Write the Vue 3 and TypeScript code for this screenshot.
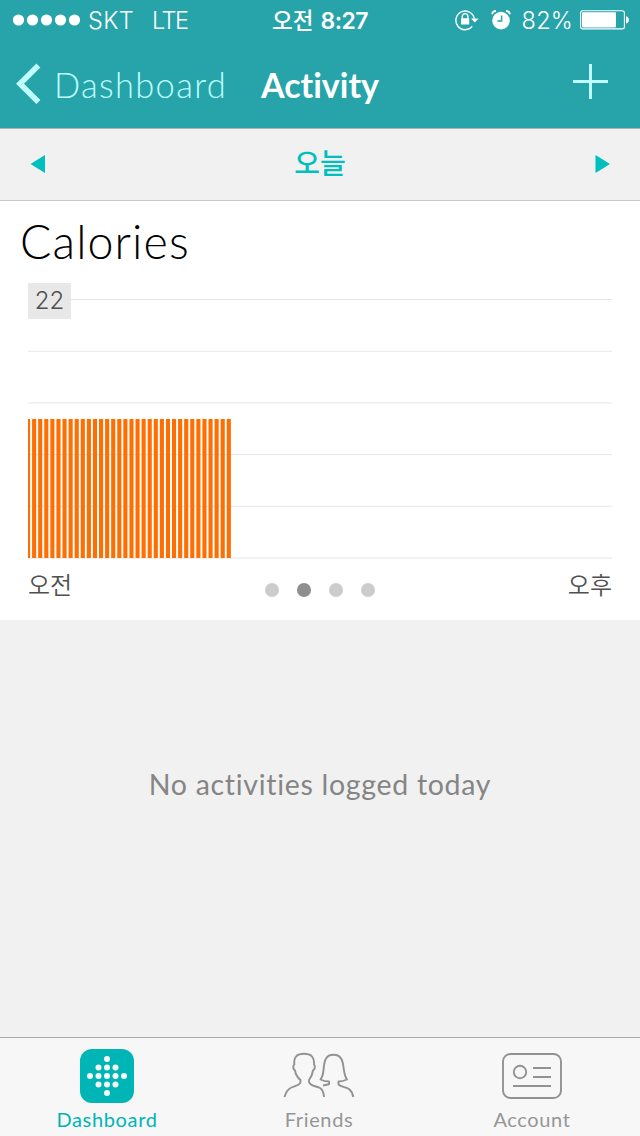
<script setup lang="ts">
const gridLines: number[] = Array.from({ length: 6 }, (_, i) => 16 + i * 51.7)

interface Bar { x: number; width: number }
const bars: Bar[] = Array.from({ length: 34 }, (_, i) => {
  const start = -2 + (i * 584) / 96
  const x = Math.max(0, start)
  return { x, width: start + 4.1 - x }
})

const pages = [0, 1, 2, 3]
const activePage = 1

const logoDots: [number, number][] = [
  [27, 10],
  [18.5, 18.5], [27, 18.5], [35.5, 18.5],
  [10, 27], [18.5, 27], [27, 27], [35.5, 27], [44, 27],
  [18.5, 35.5], [27, 35.5], [35.5, 35.5],
  [27, 44],
]
</script>

<template>
  <div class="screen">
    <header class="top">
      <div class="status">
        <div class="status-left">
          <svg class="signal" width="68" height="12" viewBox="0 0 68 12">
            <circle v-for="n in 5" :key="n" :cx="5.5 + (n - 1) * 14" cy="6" r="5.6" fill="#fff" />
          </svg>
          <span class="carrier">SKT</span>
          <span class="network">LTE</span>
        </div>
        <div class="clock"><span class="ampm">오전</span><span class="time">8:27</span></div>
        <div class="status-right">
          <svg class="lock" width="24" height="22" viewBox="0 0 24 22">
            <path d="M17.3 17.4A9.3 9.3 0 1 1 19.3 9.5" fill="none" stroke="#fff" stroke-width="1.4" />
            <path d="M16 9.5h7.500l-3.700 4z" fill="#fff" />
            <path d="M7.300 10V7.400a2.800 2.800 0 0 1 5.600 0V10" fill="none" stroke="#fff" stroke-width="1.4" />
            <rect x="6" y="9.300" width="8.200" height="6.200" rx=".5" fill="#fff" />
          </svg>
          <svg class="alarm" width="20" height="20" viewBox="0 0 20 20">
            <circle cx="10" cy="10.600" r="8.800" fill="#fff" />
            <path d="M1 4.200A4 4 0 0 1 5 1M15 1a4 4 0 0 1 4 3.200" fill="none" stroke="#fff" stroke-width="1.8" />
            <path d="M10.600 5.500v5.600H6.400" fill="none" stroke="#26a4a9" stroke-width="1.5" />
          </svg>
          <span class="percent">82%</span>
          <svg class="battery" width="50" height="20" viewBox="0 0 50 20">
            <rect x=".6" y=".7" width="43.800" height="18.200" rx="2.200" fill="none" stroke="#fff" stroke-width="1.1" />
            <rect x="2" y="2.200" width="34" height="15.200" rx=".8" fill="#fff" />
            <path d="M46 6.200c3.800.5 3.800 6.800 0 7.300z" fill="#fff" />
          </svg>
        </div>
      </div>
      <nav class="nav">
        <svg class="back" width="26" height="42" viewBox="0 0 26 42">
          <path d="M22.400 2.500 4 20.800 22.400 39.100" fill="none" stroke="#bfffff" stroke-width="5.6" />
        </svg>
        <span class="back-label">Dashboard</span>
        <h1>Activity</h1>
        <svg class="add" width="35" height="35" viewBox="0 0 35 35">
          <path d="M17.500 0v35M0 17.500h35" stroke="#bfffff" stroke-width="3" />
        </svg>
      </nav>
    </header>

    <div class="day">
      <svg width="15" height="18" viewBox="0 0 15 18"><path d="M.5 9 15 0v18z" fill="#00bfbf" /></svg>
      <span class="today">오늘</span>
      <svg width="15" height="18" viewBox="0 0 15 18"><path d="M15 9 .5 0v18z" fill="#00bfbf" /></svg>
    </div>

    <section class="card">
      <h2>Calories</h2>
      <div class="chart">
        <svg width="584" height="276" viewBox="0 0 584 276">
          <rect v-for="y in gridLines" :key="y" x="0" :y="y" width="584" height="1" fill="#e6e6e6" />
          <rect v-for="b in bars" :key="b.x" :x="b.x" y="136" :width="b.width" height="139" fill="#ff6e00" />
        </svg>
        <span class="peak">22</span>
      </div>
      <div class="axis">
        <span>오전</span>
        <div class="dots">
          <i v-for="p in pages" :key="p" :class="{ active: p === activePage }"></i>
        </div>
        <span>오후</span>
      </div>
    </section>

    <main class="empty"><p>No activities logged today</p></main>

    <footer class="tabs">
      <div class="tab selected">
        <svg width="54" height="54" viewBox="0 0 54 54">
          <rect width="54" height="54" rx="12" fill="#00b5b5" />
          <circle v-for="([x, y], i) in logoDots" :key="i" :cx="x" :cy="y" r="3" fill="#f7f7f7" />
        </svg>
        <span>Dashboard</span>
      </div>
      <div class="tab">
        <svg width="72" height="54" viewBox="0 0 72 54">
          <g fill="none" stroke="#929292" stroke-width="1.9" stroke-linejoin="round">
            <path d="M1.500 48C3 43 4.500 40.500 7.500 39C11 37 17.500 36.500 17.500 33V31C14.500 28.500 12.500 25 12 21.500C10 20 9.500 17 11.300 15.500C10.500 8 14 4.700 21 4.700S31.500 8 31 15.500C32.500 17 32 20 30 21.500C29.500 25 28 28.500 26 31V33C27 37 33 37 37 39C39.500 40.500 40.700 43 41 48" />
            <path d="M40 36.500 46 35.300V32.500C43 32.500 40 32 37.500 30.500C42 25 39.500 17 42.500 10.500C44 7 47 5.700 50.500 5.700S57 7 58.700 10.500C61.500 17 60 25 64 30.500C61 32 58 32.500 55.500 32.500V35.500C58 38 63 38 66 40C68.500 42 69.700 44.500 70.300 48" />
          </g>
        </svg>
        <span>Friends</span>
      </div>
      <div class="tab">
        <svg width="60" height="54" viewBox="0 0 60 54">
          <g fill="none" stroke="#929292" stroke-width="1.9">
            <rect x="1" y="5" width="58" height="44" rx="7.500" />
            <circle cx="18" cy="23" r="6.200" />
            <path d="M31 19h18M31 28h18M11 37h38" />
          </g>
        </svg>
        <span>Account</span>
      </div>
    </footer>
  </div>
</template>

<style>
body { margin: 0; }
</style>

<style scoped>
.screen {
  width: 640px;
  height: 1136px;
  display: flex;
  flex-direction: column;
  overflow: hidden;
  background: #f1f1f1;
  font-family: Lato, "Noto Sans CJK KR", sans-serif;
  font-variant-ligatures: none;
}
h1, h2, p { margin: 0; }
svg { display: block; flex: none; }
span, h1, h2, p { white-space: nowrap; }

.top {
  box-sizing: border-box;
  height: 129px;
  background: #26a4a9;
  border-bottom: 1px solid #b0b0b0;
  color: #fff;
}
.status {
  height: 40px;
  display: grid;
  grid-template-columns: 272px 1fr auto;
  font-family: Inter, "Noto Sans CJK KR", sans-serif;
  font-size: 23.5px;
  font-weight: 300;
  line-height: 40px;
}
.status-left, .status-right, .clock { display: flex; align-items: center; }
.status-left { padding-left: 13px; }
.status span { padding-top: 2px; line-height: 38px; }
.carrier { margin-left: 7px; letter-spacing: 0.3px; }
.network { margin-left: 18px; letter-spacing: -1.4px; }
.clock { font-weight: 600; }
.ampm { font-weight: 500; font-size: 22.5px; }
.time { margin-left: 7px; font-size: 23px; letter-spacing: -0.5px; }
.status-right { padding-right: 10px; }
.alarm { margin-left: 12px; }
.percent { margin-left: 11px; letter-spacing: 0.2px; }
.battery { margin-left: 7px; }
.nav { height: 88px; display: flex; align-items: center; }
.back { margin-left: 16px; }
.back-label {
  margin-left: 12px;
  width: 207px;
  color: #bfffff;
  font-size: 34.5px;
  font-weight: 300;
  letter-spacing: 1.3px;
  line-height: 88px;
  padding-top: 2px;
}
h1 { font-size: 34px; font-weight: 700; line-height: 88px; padding-top: 2px; }
.add { margin-left: auto; margin-right: 32px; margin-top: -6px; }

.day {
  box-sizing: border-box;
  height: 72px;
  padding: 0 30px 1px;
  display: flex;
  align-items: center;
  justify-content: space-between;
  border-bottom: 1px solid #c8c8c8;
}
.today { color: #00bfbf; font-size: 28px; font-weight: 500; line-height: 68px; padding-bottom: 2px; }

.card { height: 419px; background: #fff; }
h2 {
  height: 82px;
  padding-left: 20px;
  font-size: 46.5px;
  font-weight: 300;
  letter-spacing: 1.1px;
  line-height: 81px;
  color: #000;
}
.chart { position: relative; height: 276px; padding: 0 28px; }
.peak {
  position: absolute;
  left: 28px;
  top: 0;
  width: 43px;
  height: 36px;
  background: #e8e8e8;
  color: #505050;
  font-family: Inter, sans-serif;
  font-size: 24px;
  font-weight: 350;
  line-height: 35px;
  text-align: center;
}
.axis {
  height: 61px;
  padding: 0 28px;
  display: flex;
  justify-content: space-between;
  color: #505050;
  font-size: 24px;
  line-height: 52px;
  font-weight: 350;
}
.dots { display: flex; gap: 18px; padding-top: 24px; }
.dots i { width: 14px; height: 14px; border-radius: 50%; background: #ccc; }
.dots .active { background: #8e8e8e; }

.empty { height: 417px; text-align: center; color: #858585; }
.empty p { font-size: 28.5px; line-height: 36px; padding-top: 146px; letter-spacing: 0.7px; }

.tabs {
  box-sizing: border-box;
  height: 99px;
  display: grid;
  grid-template-columns: 214px 210px 216px;
  background: #f7f7f7;
  border-top: 1px solid #a8a8a8;
  color: #969696;
}
.tab { display: flex; flex-direction: column; align-items: center; padding-top: 11px; }
.tab span { font-size: 20px; line-height: 24px; margin-top: 4px; letter-spacing: 0.65px; }
.selected { color: #00b5b5; }
</style>
